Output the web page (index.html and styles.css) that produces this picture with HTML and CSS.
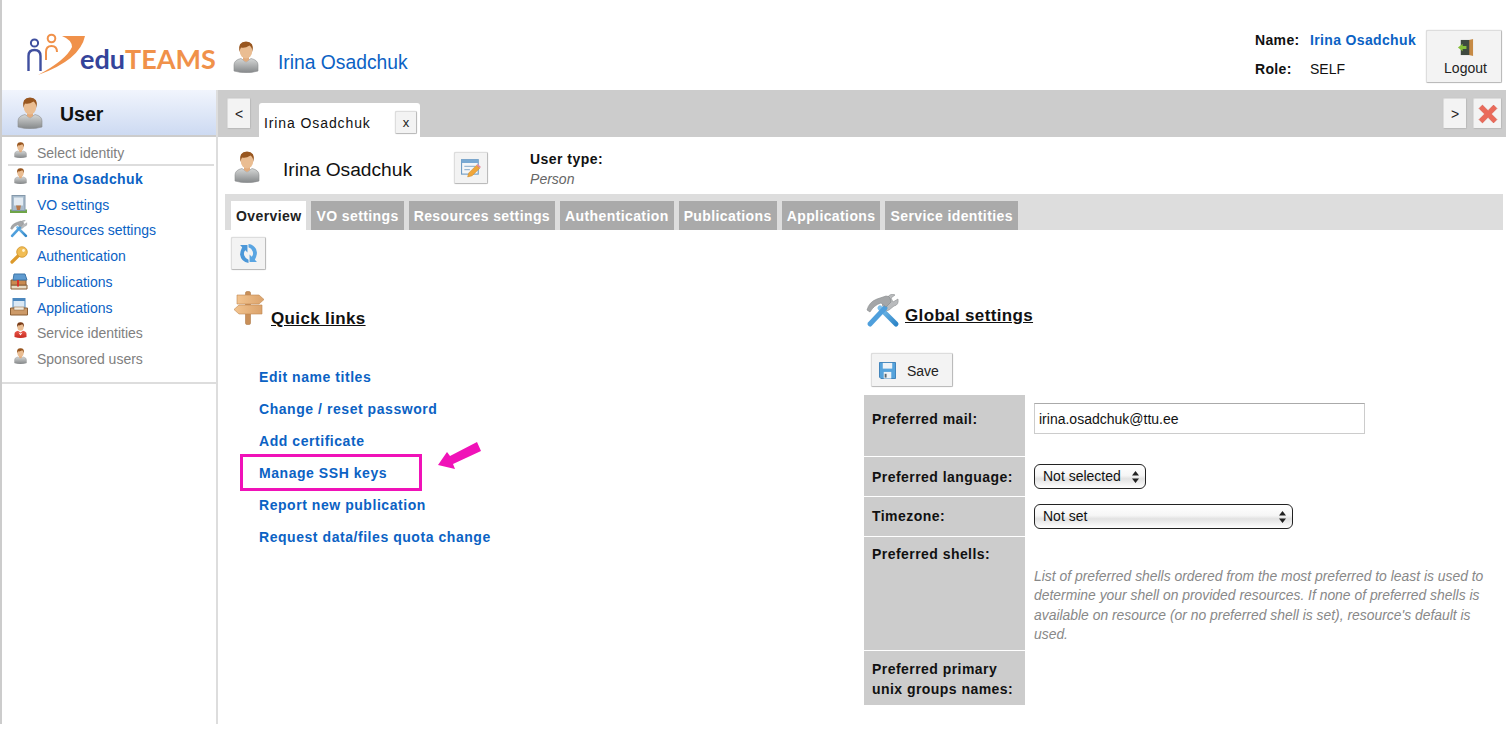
FILE: index.html
```html
<!DOCTYPE html>
<html lang="en">
<head>
    <meta charset="UTF-8">
    <meta name="viewport" content="width=device-width, initial-scale=1.0">
    <title>Perun - User</title>
    <link rel="stylesheet" href="styles.css">
</head>
<body>
<div class="page">

    <!-- Top header -->
    <header class="top">
        <div class="logo">
            <svg class="logo-mark" viewBox="27 33 53 44" width="53" height="44">
                <defs>
                    <linearGradient id="grayBody" x1="0" y1="0" x2="0" y2="1">
                        <stop offset="0" stop-color="#d5d7d6"/>
                        <stop offset="1" stop-color="#85888a"/>
                    </linearGradient>
                    <linearGradient id="redBody" x1="0" y1="0" x2="0" y2="1">
                        <stop offset="0" stop-color="#ec5a4c"/>
                        <stop offset="1" stop-color="#c62a20"/>
                    </linearGradient>
                    <linearGradient id="blueHandle" x1="0" y1="0" x2="1" y2="1">
                        <stop offset="0" stop-color="#7cc0ec"/>
                        <stop offset="1" stop-color="#2f86c8"/>
                    </linearGradient>
                    <linearGradient id="wood" x1="0" y1="0" x2="1" y2="0">
                        <stop offset="0" stop-color="#f3c48f"/>
                        <stop offset="1" stop-color="#dba36c"/>
                    </linearGradient>
                    <symbol id="i-person" viewBox="0 0 26 32">
                        <path d="M1 30V24Q1 19 8 17.500L13 21L18 17.500Q25 19 25 24V30Q13 33.500 1 30Z" fill="url(#grayBody)" stroke="#8b8d8e" stroke-width=".6"/>
                        <path d="M10 15H16V19L13 21L10 19Z" fill="#e2ab7c"/>
                        <ellipse cx="13" cy="9.500" rx="6.300" ry="8" fill="#eabd92"/>
                        <path d="M6.300 11Q4.500 .5 13 .5Q21.500 .5 19.700 11Q19 6 16.500 4.500Q12 7.500 8 6.500Q7 8 6.300 11Z" fill="#98561f"/>
                    </symbol>
                    <symbol id="i-person-red" viewBox="0 0 26 32">
                        <path d="M1 30V24Q1 19 8 17.500L13 21L18 17.500Q25 19 25 24V30Q13 33.500 1 30Z" fill="url(#redBody)"/>
                        <path d="M9 21L13 23L17 21L13 27Z" fill="#fff"/>
                        <ellipse cx="13" cy="9.500" rx="6.300" ry="8" fill="#eabd92"/>
                        <path d="M6.300 11Q4.500 .5 13 .5Q21.500 .5 19.700 11Q19 6 16.500 4.500Q12 7.500 8 6.500Q7 8 6.300 11Z" fill="#7a3d18"/>
                    </symbol>
                    <symbol id="i-vo" viewBox="0 0 18 18">
                        <path d="M0 14.500H17V18H0Z" fill="#6fa548"/>
                        <rect x="2" y="0.500" width="13" height="15" fill="#a9bccd" stroke="#8498aa"/>
                        <rect x="4" y="2.500" width="9" height="8" fill="#e3ebf2"/>
                        <path d="M6 10.500H11L10 15H7Z" fill="#b9794a"/>
                    </symbol>
                    <symbol id="i-tools" viewBox="0 0 34 34">
                        <path d="M30 30L14 14" stroke="url(#blueHandle)" stroke-width="5" stroke-linecap="round"/>
                        <path d="M16 11L21 6Q21 1 27 0L29 1L25 4L27 8L32 5Q33 11 28 12L23 16L20 17Z" fill="#b9bbbd" stroke="#8b8e90" stroke-width=".6"/>
                        <path d="M4 30L19 14" stroke="#4f9fdc" stroke-width="5" stroke-linecap="round"/>
                        <path d="M1 16Q3 8 11 5L20 2Q23 2 24 4L25 8L20 13L15 9Q8 11 4 18Z" fill="#a4a6a8" stroke="#85888a" stroke-width=".6"/>
                    </symbol>
                    <symbol id="i-key" viewBox="0 0 18 18">
                        <path d="M2 16L9 9" stroke="#dc9a2c" stroke-width="3.200" stroke-linecap="round"/>
                        <circle cx="12" cy="6" r="5.300" fill="#f1bd55" stroke="#cf9226" stroke-width=".8"/>
                        <circle cx="13.500" cy="4.500" r="1.400" fill="#fff4d6"/>
                    </symbol>
                    <symbol id="i-books" viewBox="0 0 18 18">
                        <path d="M1 13H17V17H1Z" fill="#e8dcc6" stroke="#8a5f35"/>
                        <path d="M1 8H16V13H1Z" fill="#c98a50" stroke="#8a5f35"/>
                        <path d="M4 2H15L17 8H3Z" fill="#5f9bd0" stroke="#3f76a8"/>
                        <path d="M7 8H9V15L8 14L7 15Z" fill="#d8322a"/>
                    </symbol>
                    <symbol id="i-apps" viewBox="0 0 18 18">
                        <rect x="3" y="0.500" width="12" height="10" fill="#dbe9f5" stroke="#4c87bd"/>
                        <rect x="3" y="0.500" width="12" height="2.500" fill="#4c87bd"/>
                        <path d="M0.500 10H17.500V17H0.500Z" fill="#cd9a68" stroke="#8a5f35"/>
                        <rect x="4" y="9" width="10" height="3" fill="#f3ebdd" stroke="#8a5f35" stroke-width=".5"/>
                    </symbol>
                    <symbol id="i-sign" viewBox="0 0 32 34">
                        <rect x="12.500" y="0.500" width="5" height="33" rx="1.500" fill="#c98f58" stroke="#b07a48" stroke-width=".6"/>
                        <path d="M4 4H26L31 8.500L26 13H4Z" fill="url(#wood)" stroke="#c08850" stroke-width=".6"/>
                        <path d="M6 14H29V23H6L1 18.500Z" fill="url(#wood)" stroke="#c08850" stroke-width=".6"/>
                    </symbol>
                    <symbol id="i-refresh" viewBox="0 0 18 18">
                        <path d="M1 1H8V8L6 6Q4 8 5 11Q6 14 9 15V18Q2 17 1 10Q1 7 3 3Z" fill="#4b97d8"/>
                        <path d="M17 17H10V10L12 12Q14 10 13 7Q12 4 9 3V0Q16 1 17 8Q17 11 15 15Z" fill="#5aa5e2"/>
                    </symbol>
                    <symbol id="i-save" viewBox="0 0 18 18">
                        <path d="M.5 .5H17.500V17.500H2L.5 16Z" fill="#55a3dc" stroke="#3a80b8"/>
                        <rect x="4" y="1" width="10" height="6" fill="#eef3f7"/>
                        <rect x="5" y="10.500" width="8" height="7" fill="#eef3f7"/>
                        <rect x="6" y="12.500" width="2" height="4" fill="#5c6770"/>
                    </symbol>
                    <symbol id="i-edit" viewBox="0 0 18 18">
                        <rect x=".5" y="1.500" width="15" height="13" fill="#f4f6f8" stroke="#6f9cc4"/>
                        <rect x=".5" y="1.500" width="15" height="3" fill="#79a9d3"/>
                        <path d="M3 7.500H13M3 10.500H8" stroke="#9ab8d2"/>
                        <path d="M6 17L7 13.500L14 6.500L17 9L10 16Z" fill="#f0a63a" stroke="#c98a2a" stroke-width=".5"/>
                        <path d="M14 6.500L15 5.500L18 8L17 9Z" fill="#e58aa0"/>
                    </symbol>
                    <symbol id="i-door" viewBox="0 0 18 18">
                        <rect x="4" y="1" width="11" height="16" fill="#3f4a40"/>
                        <path d="M13 1L17 0V18L13 17Z" fill="#c68a45"/>
                        <path d="M1 9L6 5V7.500H10V10.500H6V13Z" fill="#86bf3a"/>
                    </symbol>
                    <symbol id="i-close" viewBox="0 0 18 18">
                        <path d="M1 4L4 1L9 6L14 1L17 4L12 9L17 14L14 17L9 12L4 17L1 14L6 9Z" fill="#ea6a5a" stroke="#d6594a" stroke-width=".6"/>
                    </symbol>
                </defs>
                <circle cx="34.500" cy="43" r="3.600" fill="none" stroke="#3f4f9f" stroke-width="2"/>
                <path d="M28.500 71V56Q28.500 50 34.500 50Q40.500 50 40.500 56V71" fill="none" stroke="#3f4f9f" stroke-width="2.400"/>
                <circle cx="51.500" cy="38.500" r="3.800" fill="none" stroke="#f0914a" stroke-width="2"/>
                <path d="M46 60V52Q46 46 51.500 46Q57 46 57 52" fill="none" stroke="#f0914a" stroke-width="2"/>
                <path d="M62 36Q74 36 85 36Q80 60 38 75Q66 60 72 47Q72 40 62 36Z" fill="#f0914a"/>
            </svg>
            <span class="logo-edu">edu</span><span class="logo-teams">TEAMS</span>
        </div>
        <svg class="head-person"><use href="#i-person"/></svg>
        <a class="head-name" href="#">Irina Osadchuk</a>
        <div class="who">
            <b>Name:</b><a href="#">Irina Osadchuk</a>
            <b>Role:</b><span>SELF</span>
        </div>
        <button class="btn logout">
            <svg class="logout-icon"><use href="#i-door"/></svg>
            Logout
        </button>
    </header>

    <div class="body-row">
        <!-- Left menu -->
        <aside class="side">
            <div class="side-head">
                <svg class="side-head-icon"><use href="#i-person"/></svg>
                <span>User</span>
            </div>
            <ul class="side-menu">
                <li class="muted first"><svg class="mi"><use href="#i-person"/></svg>Select identity</li>
                <li class="current"><svg class="mi"><use href="#i-person"/></svg>Irina Osadchuk</li>
                <li><svg class="mi wide"><use href="#i-vo"/></svg>VO settings</li>
                <li><svg class="mi wide"><use href="#i-tools"/></svg>Resources settings</li>
                <li><svg class="mi wide"><use href="#i-key"/></svg>Authentication</li>
                <li><svg class="mi wide"><use href="#i-books"/></svg>Publications</li>
                <li><svg class="mi wide"><use href="#i-apps"/></svg>Applications</li>
                <li class="muted"><svg class="mi"><use href="#i-person-red"/></svg>Service identities</li>
                <li class="muted"><svg class="mi"><use href="#i-person"/></svg>Sponsored users</li>
            </ul>
        </aside>

        <div class="main">
            <!-- Open tabs -->
            <div class="tabbar">
                <button class="btn nav-btn">&lt;</button>
                <div class="open-tab">
                    <span>Irina Osadchuk</span>
                    <button class="btn tab-x">x</button>
                </div>
                <button class="btn nav-btn next">&gt;</button>
                <button class="btn nav-btn close"><svg class="close-icon"><use href="#i-close"/></svg></button>
            </div>

            <div class="content">
                <div class="title-row">
                    <svg class="title-icon"><use href="#i-person"/></svg>
                    <span class="title-name">Irina Osadchuk</span>
                    <button class="btn edit-btn"><svg class="edit-icon"><use href="#i-edit"/></svg></button>
                    <div class="user-type">
                        <b>User type:</b>
                        <i>Person</i>
                    </div>
                </div>

                <div class="subtabs">
                    <span class="subtab active">Overview</span>
                    <span class="subtab">VO settings</span>
                    <span class="subtab">Resources settings</span>
                    <span class="subtab">Authentication</span>
                    <span class="subtab">Publications</span>
                    <span class="subtab">Applications</span>
                    <span class="subtab">Service identities</span>
                </div>

                <button class="btn refresh"><svg class="refresh-icon"><use href="#i-refresh"/></svg></button>

                <div class="columns">
                    <section class="col-left">
                        <h2 class="heading quick-head">
                            <svg class="sign-icon"><use href="#i-sign"/></svg>
                            <span>Quick links</span>
                        </h2>
                        <ul class="links">
                            <li><a href="#">Edit name titles</a></li>
                            <li><a href="#">Change / reset password</a></li>
                            <li><a href="#">Add certificate</a></li>
                            <li class="marked">
                                <a href="#">Manage SSH keys</a>
                                <span class="mark-box"></span>
                                <svg class="mark-arrow" viewBox="0 0 44 30" width="44" height="30">
                                    <path d="M0 24L9 11L12 15L39 1L43 10L15 23L17 28Z" fill="#f012b8"/>
                                </svg>
                            </li>
                            <li><a href="#">Report new publication</a></li>
                            <li><a href="#">Request data/files quota change</a></li>
                        </ul>
                    </section>

                    <section class="col-right">
                        <h2 class="heading global-head">
                            <svg class="tools-icon"><use href="#i-tools"/></svg>
                            <span>Global settings</span>
                        </h2>
                        <button class="btn save"><svg class="save-icon"><use href="#i-save"/></svg>Save</button>
                        <div class="settings">
                            <div class="lbl row-mail">Preferred mail:</div>
                            <div class="val row-mail"><input class="text-input" type="text" value="irina.osadchuk@ttu.ee"></div>

                            <div class="lbl lbl-mid lbl-lang">Preferred language:</div>
                            <div class="val val-mid">
                                <div class="sel sel-lang">
                                    <select><option>Not selected</option></select>
                                    <svg class="sel-arrows" viewBox="0 0 7 12" width="7" height="12"><path d="M3.500 0L7 4.500H0ZM3.500 12L0 7.500H7Z" fill="#222"/></svg>
                                </div>
                            </div>

                            <div class="lbl lbl-mid">Timezone:</div>
                            <div class="val val-mid">
                                <div class="sel sel-zone">
                                    <select><option>Not set</option></select>
                                    <svg class="sel-arrows" viewBox="0 0 7 12" width="7" height="12"><path d="M3.500 0L7 4.500H0ZM3.500 12L0 7.500H7Z" fill="#222"/></svg>
                                </div>
                            </div>

                            <div class="lbl lbl-shells">Preferred shells:</div>
                            <div class="val val-help">
                                <p class="help">List of preferred shells ordered from the most preferred to least is used to determine your shell on provided resources. If none of preferred shells is available on resource (or no preferred shell is set), resource's default is used.</p>
                            </div>

                            <div class="lbl lbl-groups">Preferred primary unix groups names:</div>
                            <div class="val"></div>
                        </div>
                    </section>
                </div>
            </div>
        </div>
    </div>
</div>
</body>
</html>
```

FILE: styles.css
```css
body {
    margin: 0;
    background: #fff;
    color: #111;
    font-family: "Liberation Sans", Arial, sans-serif;
    font-size: 14px;
    overflow: hidden;
}

a {
    color: #0b62c4;
    text-decoration: none;
}

ul {
    list-style: none;
    margin: 0;
    padding: 0;
}

.page {
    width: 1504px;
    height: 724px;
    border-left: 2px solid #ccc;
    display: flex;
    flex-direction: column;
}

/* Buttons share the same light gray look */
.btn {
    background: #f3f3f3;
    border: 1px solid #ddd;
    border-bottom-color: #bbb;
    border-right-color: #bbb;
    border-radius: 2px;
    box-shadow: 0 0 1px #bbb;
    color: #222;
    font-family: inherit;
    font-size: 14px;
    padding: 0;
    box-sizing: border-box;
}

/* Top header */
.top {
    height: 90px;
    flex: none;
    display: flex;
    align-items: flex-start;
}

.logo {
    display: flex;
    align-items: flex-start;
    margin: 33px 0 0 25px;
    width: 206px;
    font-family: Lato, sans-serif;
    font-size: 27px;
    font-weight: 700;
    line-height: 44px;
}

.logo-mark {
    overflow: visible;
    flex: none;
}

.logo-edu {
    color: #34449a;
    margin-top: 4px;
}

.logo-teams {
    color: #f0914a;
    margin-top: 4px;
}

.head-person {
    width: 26px;
    height: 32px;
    margin-top: 41px;
}

.head-name {
    font-size: 19.300px;
    margin: 51px 0 0 19px;
    line-height: 23px;
}

.who {
    margin: 25px 0 0 auto;
    width: 171px;
    display: grid;
    grid-template-columns: 55px auto;
    grid-auto-rows: 29px;
    align-items: center;
    letter-spacing: .35px;
}

.who a {
    font-weight: bold;
}

.who span {
    letter-spacing: 0;
}

.logout {
    width: 76px;
    height: 53px;
    margin: 30px 4px 0 0;
    padding-left: 3px;
    display: flex;
    flex-direction: column;
    align-items: center;
}

.logout-icon {
    width: 17px;
    height: 17px;
    margin: 8px 0 4px;
}

/* Below the header */
.body-row {
    flex: 1;
    display: flex;
    min-height: 0;
}

.side {
    width: 214px;
    flex: none;
    border-right: 2px solid #ddd;
}

.side-head {
    height: 45px;
    background: linear-gradient(180deg, #f1f5fd, #cddaf2);
    border-bottom: 2px solid #ccc;
    display: flex;
    align-items: center;
    font-size: 19.500px;
    font-weight: bold;
}

.side-head span {
    margin-top: 3px;
}

.side-head-icon {
    width: 26px;
    height: 32px;
    margin: 0 17px 0 15px;
}

.side-menu {
    height: 242px;
    padding-top: 3px;
    border-bottom: 2px solid #ddd;
}

.side-menu li {
    height: 25.750px;
    display: flex;
    align-items: center;
    color: #0b62c4;
}

.side-menu li.first {
    border-bottom: 2px solid #ddd;
    margin: 0 2px 0 6px;
    height: 23px;
    padding-top: 1px;
}

.side-menu li.muted {
    color: #808080;
}

.side-menu li.current {
    font-weight: bold;
    letter-spacing: .35px;
}

.mi {
    width: 13px;
    height: 16px;
    margin: -6px 10px 0 12px;
    flex: none;
}

.mi.wide {
    width: 18px;
    height: 18px;
    margin: -2px 9px 0 8px;
}

.first .mi {
    margin-left: 6px;
}

.main {
    flex: 1;
    min-width: 0;
}

/* Open tabs bar */
.tabbar {
    height: 47px;
    background: #ccc;
    display: flex;
    align-items: flex-start;
    box-sizing: border-box;
    padding: 8px 4px 0 9px;
}

.nav-btn {
    width: 24px;
    height: 31px;
    flex: none;
}

.nav-btn.next {
    margin-left: auto;
}

.nav-btn.close {
    width: 29px;
    margin-left: 6px;
    padding-top: 3px;
}

.close-icon {
    width: 20px;
    height: 20px;
}

.open-tab {
    width: 161px;
    height: 34px;
    margin: 5px 0 0 8px;
    background: #fff;
    border-radius: 3px 3px 0 0;
    display: flex;
    align-items: flex-start;
    box-sizing: border-box;
    padding: 12px 3px 0 5px;
    letter-spacing: .9px;
}

.tab-x {
    width: 22px;
    height: 23px;
    margin: -4px 0 0 auto;
    font-size: 13px;
}

.content {
    padding-left: 7px;
}

.title-row {
    height: 57px;
    display: flex;
    align-items: flex-start;
}

.title-icon {
    width: 26px;
    height: 32px;
    margin: 14px 23px 0 9px;
}

.title-name {
    font-size: 19.200px;
    margin-top: 21px;
    line-height: 23px;
}

.edit-btn {
    width: 34px;
    height: 32px;
    margin: 15px 0 0 42px;
}

.edit-icon {
    width: 20px;
    height: 20px;
    margin-top: 3px;
}

.user-type {
    margin: 14px 0 0 42px;
    display: flex;
    flex-direction: column;
    gap: 4px;
    line-height: 16px;
}

.user-type b {
    letter-spacing: .45px;
}

.user-type i {
    color: #666;
}

/* Sub tabs */
.subtabs {
    width: 1278px;
    height: 36px;
    background: #ddd;
    box-sizing: border-box;
    padding: 7px 0 0 6px;
    display: flex;
    gap: 5px;
}

.subtab {
    background: #aaa;
    color: #fff;
    font-weight: bold;
    letter-spacing: .4px;
    height: 29px;
    line-height: 31px;
    padding: 0 5px;
}

.subtab.active {
    background: #fff;
    color: #222;
}

.refresh {
    display: block;
    width: 35px;
    height: 33px;
    margin: 7px 0 0 6px;
}

.refresh-icon {
    width: 19px;
    height: 19px;
    margin-top: 3px;
}

.columns {
    display: flex;
}

.col-left {
    width: 639px;
    flex: none;
}

.heading {
    margin: 0;
    font-size: 17px;
    font-weight: bold;
    letter-spacing: .35px;
    display: flex;
    align-items: flex-end;
}

.heading span {
    text-decoration: underline;
}

.quick-head {
    margin: 21px 0 0 8px;
    height: 34px;
}

.quick-head span {
    margin-bottom: -4px;
}

.sign-icon {
    width: 32px;
    height: 34px;
    margin-right: 6px;
}

.links {
    margin: 36px 0 0 34px;
}

.links li {
    height: 32px;
    line-height: 32px;
    font-weight: bold;
    letter-spacing: .55px;
}

/* Pink annotation around one link */
.marked {
    position: relative;
}

.mark-box {
    position: absolute;
    left: -19px;
    top: -3px;
    width: 176px;
    height: 31px;
    border: 3px solid #f012b8;
}

.mark-arrow {
    position: absolute;
    left: 179px;
    top: -16px;
}

.col-right {
    flex: 1;
}

.global-head {
    margin: 24px 0 0 2px;
    height: 34px;
}

.global-head span {
    margin-bottom: 2px;
}

.tools-icon {
    width: 34px;
    height: 34px;
    margin-right: 5px;
}

.save {
    display: flex;
    align-items: center;
    width: 82px;
    height: 34px;
    margin: 25px 0 8px 7px;
    padding: 1px 0 0 7px;
}

.save-icon {
    width: 17px;
    height: 17px;
    margin-right: 11px;
}

/* Settings table */
.settings {
    display: grid;
    grid-template-columns: 161px 1fr;
    grid-auto-rows: auto;
    row-gap: 1px;
}

.lbl {
    background: #ccc;
    box-sizing: border-box;
    padding: 0 8px;
    font-weight: bold;
    letter-spacing: .45px;
    line-height: 19px;
}

.val {
    box-sizing: border-box;
    padding-left: 9px;
}

.row-mail {
    height: 61px;
}

.lbl.row-mail {
    padding-top: 15px;
}

.val.row-mail {
    padding-top: 8px;
}

.text-input {
    width: 331px;
    height: 31px;
    box-sizing: border-box;
    border: 1px solid #ccc;
    border-top-color: #aaa;
    padding: 0 4px;
    font-family: inherit;
    font-size: 14px;
    color: #111;
    outline: none;
}

.lbl-mid {
    height: 39px;
    display: flex;
    align-items: center;
}

.lbl-lang {
    padding-top: 1px;
}

.val-mid {
    height: 39px;
    display: flex;
    align-items: center;
}

.sel {
    position: relative;
    height: 25px;
}

.sel-lang {
    width: 112px;
}

.sel-zone {
    width: 259px;
}

.sel select {
    appearance: none;
    width: 100%;
    height: 100%;
    box-sizing: border-box;
    border: 1px solid #222;
    border-radius: 6px;
    background: linear-gradient(180deg, #fff 0%, #f6f6f6 45%, #e2e2e2 60%, #fff 100%);
    padding: 0 8px 1px;
    font-family: inherit;
    font-size: 14px;
    color: #111;
}

.sel-arrows {
    position: absolute;
    right: 7px;
    top: 7px;
}

.lbl-shells {
    height: 113px;
    padding-top: 8px;
}

.val-help {
    padding-top: 30px;
}

.help {
    margin: 0;
    width: 456px;
    color: #888;
    font-size: 13.900px;
    font-style: italic;
    line-height: 19.300px;
}

.lbl-groups {
    height: 54px;
    padding-top: 8px;
    line-height: 20px;
}
```
